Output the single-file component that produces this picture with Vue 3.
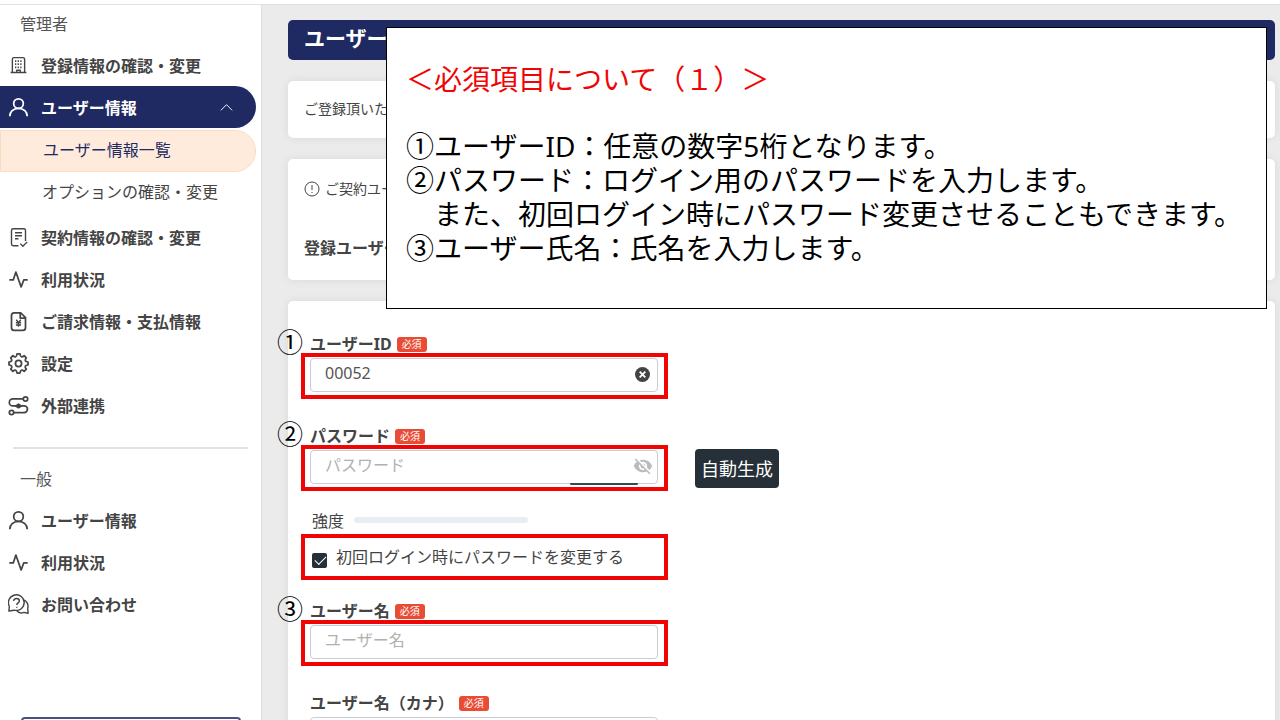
<template>
  <div class="page">
    <header class="topbar"></header>

    <nav class="sidebar">
      <p class="group">管理者</p>
      <template v-for="item in adminMenu" :key="item.label">
        <a href="#" class="item" :class="{ active: item.children }">
          <svg class="icon" :class="{ thin: item.thin }" viewBox="0 0 24 24" v-html="icons[item.icon]"></svg>
          <span>{{ item.label }}</span>
          <svg v-if="item.children" class="chevron" viewBox="0 0 16 16">
            <path d="M2 11l6-6 6 6" />
          </svg>
        </a>
        <div v-if="item.children" class="submenu">
          <a
            v-for="(child, i) in item.children"
            :key="child"
            href="#"
            class="subitem"
            :class="{ current: i === 0 }"
          >{{ child }}</a>
        </div>
      </template>

      <hr />

      <p class="group">一般</p>
      <a v-for="item in generalMenu" :key="item.label" href="#" class="item">
        <svg class="icon" :class="{ thin: item.thin }" viewBox="0 0 24 24" v-html="icons[item.icon]"></svg>
        <span>{{ item.label }}</span>
      </a>
      <button class="side-btn" type="button" aria-label="menu"></button>
    </nav>

    <main class="main">
      <h1>ユーザー</h1>
      <section class="card lead">ご登録頂いた</section>
      <section class="card contract">
        <p class="note">
          <svg viewBox="0 0 16 16">
            <circle cx="8" cy="8" r="7" />
            <path d="M8 4v5M8 11v1" />
          </svg>
          ご契約ユー
        </p>
        <p class="count">登録ユーザー</p>
      </section>

      <form class="card form" @submit.prevent>
        <div class="field">
          <span class="marker">①</span>
          <div class="label-row">
            <label for="userId">ユーザーID</label><span class="required">必須</span>
          </div>
          <div class="frame marked">
            <input id="userId" v-model="userId" type="text" />
            <button class="clear" type="button" aria-label="clear" @click="userId = ''">
              <svg viewBox="0 0 16 16">
                <circle cx="8" cy="8" r="8" />
                <path d="M5 5l6 6M11 5l-6 6" />
              </svg>
            </button>
          </div>
        </div>

        <div class="field password">
          <span class="marker">②</span>
          <div class="label-row">
            <label for="password">パスワード</label><span class="required">必須</span>
          </div>
          <div class="with-button">
            <div class="frame marked">
              <input
                id="password"
                v-model="password"
                :type="showPassword ? 'text' : 'password'"
                placeholder="パスワード"
              />
              <button class="eye" type="button" aria-label="show" @click="showPassword = !showPassword">
                <svg viewBox="0 0 24 24">
                  <path d="M12 7c2.76 0 5 2.24 5 5 0 .65-.13 1.26-.36 1.83l2.92 2.92c1.51-1.26 2.7-2.89 3.43-4.75-1.73-4.39-6-7.5-11-7.5-1.4 0-2.74.25-3.98.7l2.16 2.16C10.74 7.13 11.35 7 12 7zM2 4.27l2.28 2.28.46.46C3.08 8.3 1.78 10.02 1 12c1.73 4.39 6 7.5 11 7.5 1.55 0 3.03-.3 4.38-.84l.42.42L19.73 22 21 20.73 3.27 3 2 4.27zM7.53 9.8l1.55 1.55c-.05.21-.08.43-.08.65 0 1.66 1.34 3 3 3 .22 0 .44-.03.65-.08l1.55 1.55c-.67.33-1.41.53-2.2.53-2.76 0-5-2.24-5-5 0-.79.2-1.53.53-2.2zm4.31-.78l3.15 3.15.02-.16c0-1.66-1.34-3-3-3l-.17.01z" />
                </svg>
              </button>
              <span class="hint-edge"></span>
            </div>
            <button class="generate" type="button">自動生成</button>
          </div>
          <div class="strength">
            <span>強度</span>
            <span class="bar"></span>
          </div>
          <label class="frame marked check">
            <input v-model="mustChange" type="checkbox" />
            <span>初回ログイン時にパスワードを変更する</span>
          </label>
        </div>

        <div class="field">
          <span class="marker">③</span>
          <div class="label-row">
            <label for="userName">ユーザー名</label><span class="required">必須</span>
          </div>
          <div class="frame marked">
            <input id="userName" v-model="userName" type="text" placeholder="ユーザー名" />
          </div>
        </div>

        <div class="field">
          <div class="label-row">
            <label for="userKana">ユーザー名（カナ）</label><span class="required">必須</span>
          </div>
          <div class="frame">
            <input id="userKana" v-model="userKana" type="text" />
          </div>
        </div>
      </form>
    </main>

    <aside class="callout">
      <h2>＜必須項目について（１）＞</h2>
      <p>{{ guide.join("\n") }}</p>
    </aside>
  </div>
</template>

<script setup>
import { ref } from "vue";

const userId = ref("00052");
const password = ref("");
const showPassword = ref(false);
const mustChange = ref(true);
const userName = ref("");
const userKana = ref("");

const adminMenu = [
  { label: "登録情報の確認・変更", icon: "building", thin: true },
  {
    label: "ユーザー情報",
    icon: "user",
    children: ["ユーザー情報一覧", "オプションの確認・変更"],
  },
  { label: "契約情報の確認・変更", icon: "contract", thin: true },
  { label: "利用状況", icon: "pulse" },
  { label: "ご請求情報・支払情報", icon: "bill", thin: true },
  { label: "設定", icon: "gear" },
  { label: "外部連携", icon: "link" },
];

const generalMenu = [
  { label: "ユーザー情報", icon: "user" },
  { label: "利用状況", icon: "pulse" },
  { label: "お問い合わせ", icon: "chat", thin: true },
];

const guide = [
  "①ユーザーID：任意の数字5桁となります。",
  "②パスワード：ログイン用のパスワードを入力します。",
  "　また、初回ログイン時にパスワード変更させることもできます。",
  "③ユーザー氏名：氏名を入力します。",
];

// point on a circle around the icon centre
function polar(r, deg) {
  const a = (deg * Math.PI) / 180;
  return `${(12 + r * Math.cos(a)).toFixed(2)} ${(12 + r * Math.sin(a)).toFixed(2)}`;
}

// gear outline with 8 teeth
function gearPath() {
  let d = `M${polar(11, -9)}`;
  for (let k = 0; k < 8; k++) {
    const t = k * 45;
    d += `L${polar(11, t + 9)}Q${polar(6, t + 22.5)} ${polar(11, t + 36)}`;
  }
  return d + "z";
}

const icons = {
  building:
    '<path d="M5 20V5q0-2 2-2h10q2 0 2 2v15M3 20h18M10 20v-2.500h4v2.500"/><path stroke-width="2" d="M8 7h2M11 7h2M14 7h2M8 10.500h2M11 10.500h2M14 10.500h2M8 14h2M11 14h2M14 14h2" stroke-dasharray="1.500 .5"/>',
  user: '<circle cx="12" cy="7.500" r="5.500"/><path d="M2 22c0-5 4-9 10-9s10 4 10 9"/>',
  contract:
    '<path d="M12 21.500H6q-2 0-2-2V4q0-2 2-2h12q2 0 2 2v12M8 6.500h8M8 10h8M8 13.500h4M14 19l3 3 5-5"/>',
  pulse: '<path d="M1.500 12.500H6L9 3.500l6 17 3-8h4.500"/>',
  bill: '<path stroke-width="2" d="M14.500 2H7Q4 2 4 5v14q0 3 3 3h10q3 0 3-3V7.500zM14 2v6h6"/><path d="M9.500 10l2.500 3.500 2.500-3.500M12 13.500V18M9 13.500h6M9 16h6"/>',
  gear: `<circle cx="12" cy="12" r="3.500"/><path d="${gearPath()}"/>`,
  link: '<circle cx="20" cy="4.500" r="2.500"/><circle cx="4" cy="20" r="2.500"/><path d="M17.500 4.500H5.500a4 4 0 0 0 0 8h13a3.700 3.700 0 0 1 0 7.500h-12"/><path fill="currentColor" d="M9 12.500l3-2 3 2-3 2z"/>',
  chat: '<path d="M1 19.500l.5-5.500A9 9 0 1 1 7 18.500zM17.500 6.500a8 8 0 0 1 5 10l.5 5.500-5-1q-5 2-8-2"/><path d="M6.500 8c0-4 6.500-3.500 6.500 0 0 2.200-3 2-3 4.500M10 14.500v1.200"/>',
};
</script>

<style>
body {
  margin: 0;
  overflow: hidden;
}
</style>

<style scoped>
* {
  box-sizing: border-box;
}

.page {
  position: relative;
  display: grid;
  grid-template-columns: 262px 1fr;
  grid-template-rows: 5px 1fr;
  height: 100vh;
  overflow: hidden;
  background: #ebebeb;
  color: #444;
  font-family: "Noto Sans", "Noto Sans CJK JP", sans-serif;
  font-size: 16px;
}

p,
h1,
h2 {
  margin: 0;
}

a {
  color: inherit;
  text-decoration: none;
}

button,
input {
  font-family: inherit;
}

.topbar {
  grid-column: 1 / 3;
  background: #fff;
  border-bottom: 1px solid #e0e0e0;
}

/* sidebar */
.sidebar {
  min-height: 0;
  overflow: hidden;
  background: #fff;
  border-right: 1px solid #ddd;
}

.group {
  padding-left: 20px;
  line-height: 39px;
  color: #555;
}

.item {
  display: flex;
  align-items: center;
  gap: 12px;
  height: 42px;
  margin-right: 5px;
  padding: 0 22px 0 8px;
  font-weight: bold;
}

.icon {
  flex: none;
  width: 21px;
  height: 21px;
  fill: none;
  stroke: currentColor;
  stroke-width: 2;
  stroke-linejoin: round;
}

.icon.thin {
  stroke-width: 1.6;
}

.item.active {
  background: #1f2a63;
  color: #fff;
  border-radius: 0 21px 21px 0;
}

.chevron {
  width: 15px;
  height: 15px;
  margin-left: auto;
  fill: none;
  stroke: #fff;
}

.submenu {
  padding: 2px 5px 2px 0;
}

.subitem {
  display: block;
  height: 42px;
  padding-left: 42px;
  line-height: 40px;
}

.subitem.current {
  background: #feebdb;
  border: 1px solid #fbdcc2;
  border-radius: 0 21px 21px 0;
  color: #1f2a63;
  line-height: 38px;
}

hr {
  height: 2px;
  margin: 21px 13px 11px;
  border: 0;
  background: #e2e2e2;
}

.side-btn {
  display: block;
  width: 220px;
  height: 40px;
  margin: 92px auto 0 21px;
  border: 2px solid #4b5080;
  border-radius: 4px;
  background: #fff;
}

/* content */
.main {
  display: flex;
  flex-direction: column;
  gap: 21px;
  min-width: 0;
  padding: 15px 5px 0 26px;
}

h1 {
  flex: none;
  height: 40px;
  padding-left: 16px;
  border-radius: 5px;
  background: #1f2a63;
  color: #fff;
  font-size: 21px;
  line-height: 36px;
}

.card {
  flex: none;
  border-radius: 5px;
  background: #fff;
  box-shadow: 0 0 10px rgba(0, 0, 0, 0.08);
}

.lead {
  padding: 17px 16px 19px;
  font-size: 14px;
  line-height: 21px;
}

.contract {
  padding: 19px 16px 20px;
}

.note {
  display: flex;
  align-items: center;
  gap: 5px;
  font-size: 14px;
  line-height: 22px;
}

.note svg {
  width: 16px;
  height: 16px;
  fill: none;
  stroke: currentColor;
}

.count {
  margin-top: 36px;
  font-weight: bold;
  line-height: 24px;
}

/* form */
.form {
  padding: 34px 13px;
}

.field {
  position: relative;
}

.field + .field {
  margin-top: 28px;
}

.password + .field {
  margin-top: 22px;
}

.marker {
  position: absolute;
  left: -24px;
  top: -6px;
  color: #000;
  font-size: 26px;
  line-height: 26px;
}

.label-row {
  display: flex;
  align-items: center;
  gap: 5px;
  padding-left: 9px;
  font-weight: bold;
  line-height: 18px;
}

.required {
  padding: 0 5px;
  border-radius: 3px;
  background: #e84c35;
  color: #fff;
  font-size: 10px;
  font-weight: normal;
  line-height: 15px;
}

.frame {
  position: relative;
  width: 367px;
  height: 46px;
  padding: 1px 6px 0 5px;
  border: 4px solid transparent;
}

.marked {
  border-color: #f00505;
}

.frame input:not([type="checkbox"]) {
  width: 100%;
  height: 34px;
  padding: 0 40px 4px 14px;
  border: 1px solid #c9ccd6;
  border-radius: 4px;
  outline: none;
  background: #fff;
  color: #555;
  font-size: 16px;
}

.frame input::placeholder {
  color: #b0b0b0;
  opacity: 1;
}

.clear,
.eye {
  position: absolute;
  display: flex;
  top: 10px;
  right: 14px;
  padding: 0;
  border: 0;
  background: none;
}

.clear svg {
  width: 15px;
  height: 15px;
  fill: #444;
  stroke: #fff;
  stroke-width: 2;
}

.clear circle {
  stroke: none;
}

.eye {
  top: 7px;
  right: 11px;
}

.eye svg {
  width: 20px;
  height: 20px;
  fill: #bbb;
}

.hint-edge {
  position: absolute;
  right: 26px;
  bottom: 2px;
  width: 68px;
  height: 2px;
  border-radius: 1px;
  background: #37474f;
}

.with-button {
  display: flex;
  align-items: center;
  gap: 27px;
}

.generate {
  height: 39px;
  padding: 0 6px;
  border: 0;
  border-radius: 4px;
  background: #263038;
  color: #fff;
  font-size: 18px;
}

.strength {
  display: flex;
  align-items: center;
  gap: 10px;
  height: 43px;
  padding: 15px 0 0 11px;
}

.bar {
  width: 174px;
  height: 6px;
  border-radius: 3px;
  background: #e9edf4;
}

.check {
  display: flex;
  align-items: center;
  gap: 9px;
  padding: 0 7px;
}

.check span {
  padding-bottom: 2px;
}

.check input {
  appearance: none;
  flex: none;
  width: 15px;
  height: 15px;
  margin: 6px 0 0;
  border-radius: 2px;
  background: #263038;
}

.check input:checked::after {
  content: "";
  display: block;
  width: 10px;
  height: 5px;
  margin: 3px 0 0 3px;
  border-bottom: 1px solid #fff;
  border-left: 1px solid #fff;
  transform: rotate(-45deg);
}

/* explanation over the form */
.callout {
  position: absolute;
  top: 27px;
  left: 386px;
  right: 13px;
  padding: 34px 10px 43px 19px;
  border: 1px solid #000;
  background: #fff;
  color: #000;
  font-size: 28px;
  line-height: 34px;
  white-space: pre;
}

.callout h2 {
  margin-bottom: 33px;
  color: #f00505;
  font-size: 28px;
  font-weight: normal;
}
</style>
